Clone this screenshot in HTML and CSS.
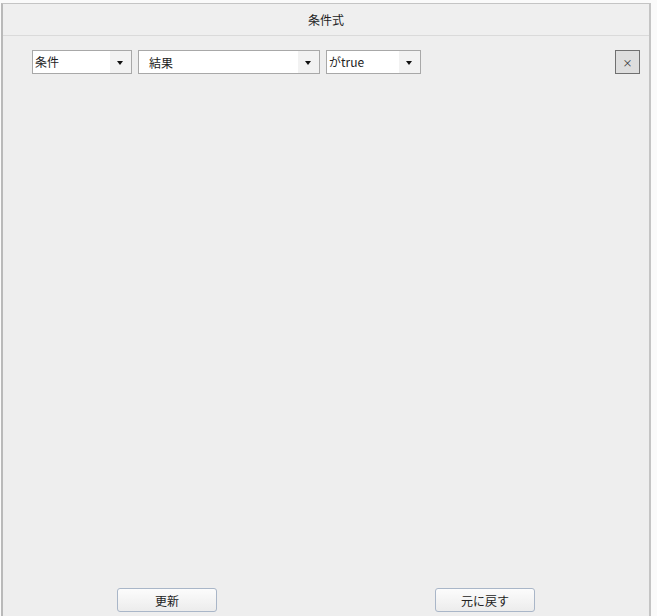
FILE: index.html
```html
<!DOCTYPE html>
<html>
	<head>
		<meta charset="UTF-8">
		<title>条件式</title>
		<link rel="stylesheet" href="styles.css">
	</head>
	<body>
		<div class="panel">
			<div class="header">条件式</div>

			<div class="row">
				<div class="combo combo-cond">
					<span class="combo-text">条件</span>
					<span class="combo-arrow"></span>
				</div>
				<div class="combo combo-result">
					<span class="combo-text">結果</span>
					<span class="combo-arrow"></span>
				</div>
				<div class="combo combo-op">
					<span class="combo-text">がtrue</span>
					<span class="combo-arrow"></span>
				</div>
				<button class="remove-btn">×</button>
			</div>

			<div class="footer">
				<button class="action-btn">更新</button>
				<button class="action-btn">元に戻す</button>
			</div>
		</div>
	</body>
</html>
```

FILE: styles.css
```css
* {
	box-sizing: border-box;
	margin: 0;
	padding: 0;
}
html, body {
	height: 100%;
	background: #fafafa;
}
body {
	font-family: "Noto Sans CJK JP", "Noto Sans", sans-serif;
	font-size: 12px;
	color: #222;
	padding: 3px 6px 0 1px;
}
.panel {
	display: flex;
	flex-direction: column;
	height: 613px;
	background: #eeeeee;
	border: 1px solid #c4c4c4;
	border-left: 2px solid #b9b9b9;
	border-right: 2px solid #c4c4c4;
	border-bottom: none;
}
.header {
	height: 32px;
	line-height: 31px;
	text-align: center;
	border-bottom: 1px solid #dadada;
	background: #efefef;
}
.row {
	display: flex;
	align-items: center;
	margin-top: 14px;
	padding: 0 9px 0 29px;
	gap: 6px;
}
.combo {
	display: flex;
	height: 24px;
	background: #fff;
	border: 1px solid #a8a8a8;
}
.combo-text {
	flex: 1;
	line-height: 21px;
	padding-left: 2px;
	white-space: nowrap;
}
.combo-arrow {
	position: relative;
	width: 21px;
	background: #f2f2f2;
}
.combo-arrow::after {
	content: "";
	position: absolute;
	left: 7px;
	top: 10px;
	border-left: 3.5px solid transparent;
	border-right: 3.5px solid transparent;
	border-top: 4px solid #111;
}
.combo-cond {
	width: 100px;
}
.combo-result {
	width: 182px;
}
.combo-result .combo-text {
	padding-left: 10px;
	line-height: 23px;
}
.combo-op {
	width: 95px;
}
.remove-btn {
	margin-left: auto;
	width: 25px;
	height: 24px;
	font-family: inherit;
	font-size: 10px;
	color: #333;
	background: #dedede;
	border: 1px solid #707070;
}
.footer {
	display: flex;
	justify-content: space-between;
	margin-top: auto;
	padding: 0 114px 4px 114px;
}
.action-btn {
	width: 100px;
	height: 24px;
	font-family: inherit;
	font-size: 12px;
	color: #222;
	background: linear-gradient(#fcfcfc, #ececec);
	border: 1px solid #a9b6c8;
	border-radius: 3px;
}
```
